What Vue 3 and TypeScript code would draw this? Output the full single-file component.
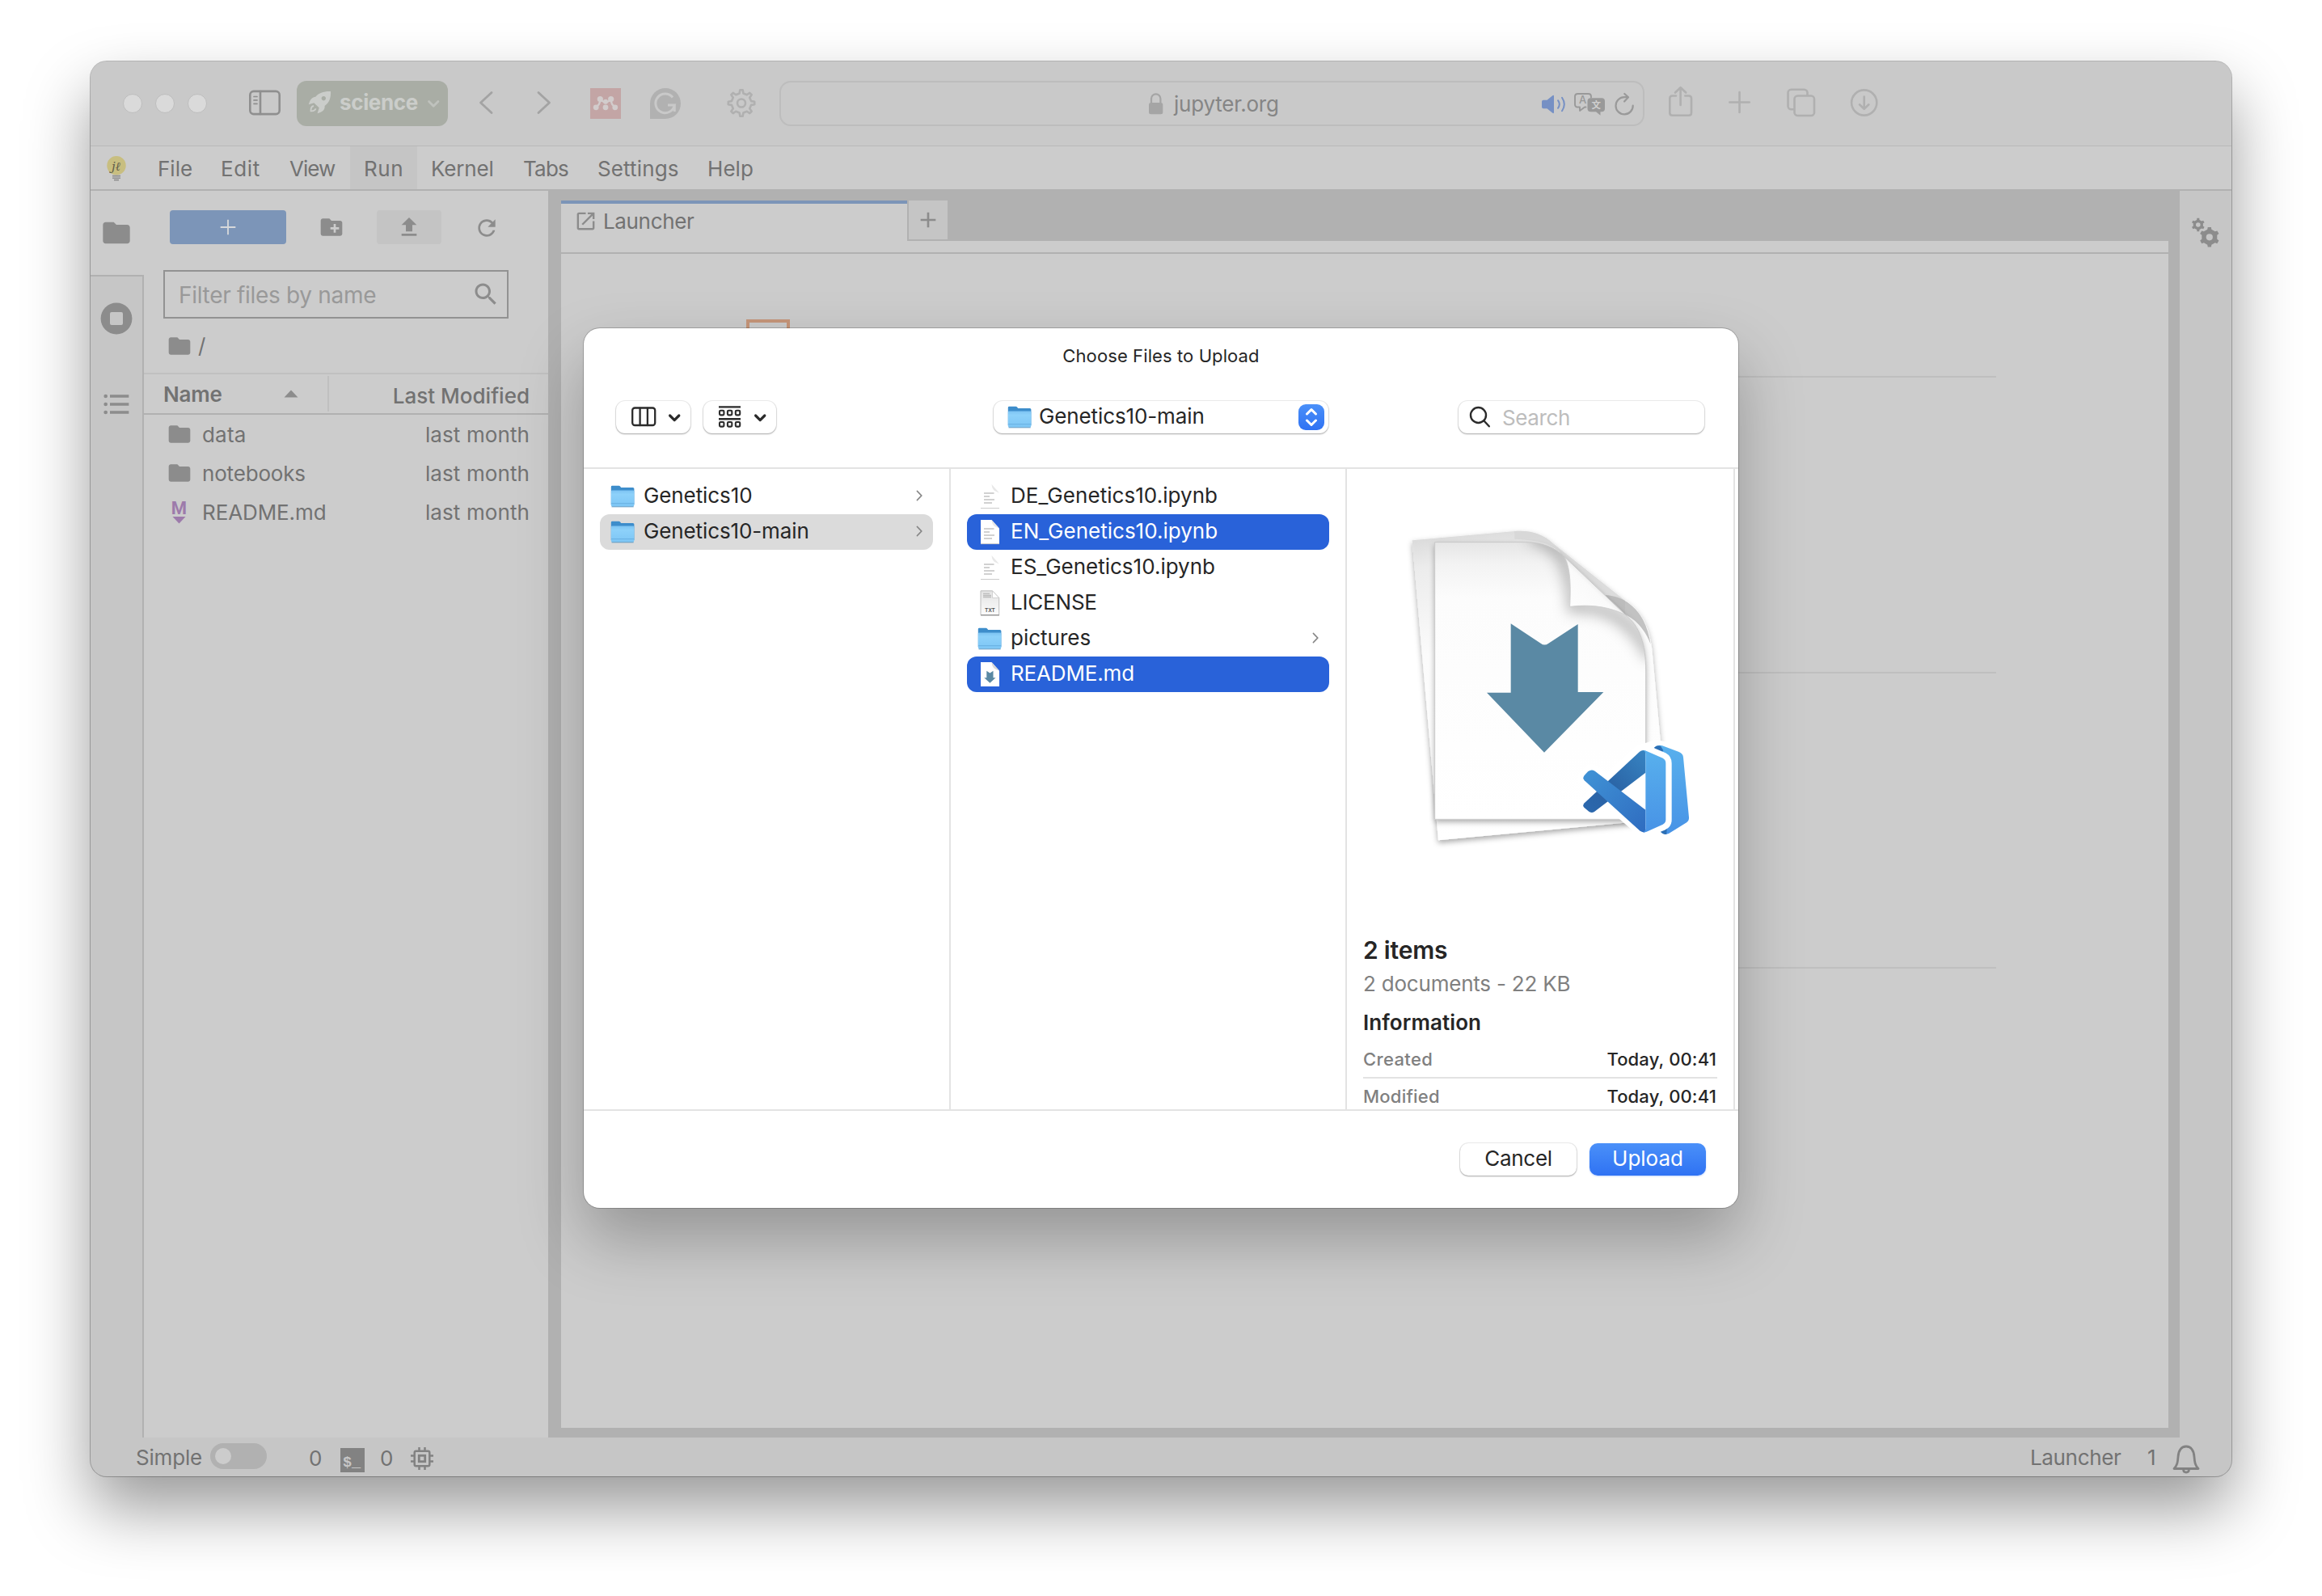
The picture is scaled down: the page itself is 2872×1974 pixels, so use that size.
<script setup lang="ts">
interface MenuItem { label: string; width: number; spacing: number; active?: boolean }
interface FileRow { name: string; kind: 'folder' | 'markdown'; spacing: number }
interface Entry { name: string; icon: 'folder' | 'doc' | 'txt' | 'md'; state?: 'active' | 'selected'; children?: boolean; spacing: number }

const menus: MenuItem[] = [
  { label: 'File', width: 78, spacing: 0 },
  { label: 'Edit', width: 85, spacing: 0.6 },
  { label: 'View', width: 92, spacing: -1 },
  { label: 'Run', width: 83, spacing: 0.6, active: true },
  { label: 'Kernel', width: 114, spacing: -0.16 },
  { label: 'Tabs', width: 92, spacing: -0.8 },
  { label: 'Settings', width: 136, spacing: 0.13 },
  { label: 'Help', width: 90, spacing: 0.07 },
]

const files: FileRow[] = [
  { name: 'data', kind: 'folder', spacing: 0.2 },
  { name: 'notebooks', kind: 'folder', spacing: -0.17 },
  { name: 'README.md', kind: 'markdown', spacing: -0.1 },
]

const parentColumn: Entry[] = [
  { name: 'Genetics10', icon: 'folder', children: true, spacing: -0.1 },
  { name: 'Genetics10-main', icon: 'folder', children: true, state: 'active', spacing: -0.12 },
]

const childColumn: Entry[] = [
  { name: 'DE_Genetics10.ipynb', icon: 'doc', spacing: 0.05 },
  { name: 'EN_Genetics10.ipynb', icon: 'doc', state: 'selected', spacing: 0.01 },
  { name: 'ES_Genetics10.ipynb', icon: 'doc', spacing: 0 },
  { name: 'LICENSE', icon: 'txt', spacing: -0.2 },
  { name: 'pictures', icon: 'folder', children: true, spacing: 0 },
  { name: 'README.md', icon: 'md', state: 'selected', spacing: -0.15 },
]

const columns = [parentColumn, childColumn]

const folderPath = 'M10 4H4c-1.1 0-1.99.9-1.99 2L2 18c0 1.1.9 2 2 2h16c1.1 0 2-.9 2-2V8c0-1.1-.9-2-2-2h-8l-2-2z'
const addPath = 'M19 13h-6v6h-2v-6H5v-2h6V5h2v6h6v2z'

// Closed outline of a cog wheel with `n` trapezoid teeth.
function gear(cx: number, cy: number, outer: number, inner: number, n: number, top = 0.2, base = 0.3): string {
  const pts: string[] = []
  const step = (Math.PI * 2) / n
  for (let i = 0; i < n; i++) {
    const a = i * step - Math.PI / 2
    const corners: [number, number][] = [[-base, inner], [-top, outer], [top, outer], [base, inner]]
    for (const [k, r] of corners) {
      pts.push(`${(cx + r * Math.cos(a + k * step)).toFixed(2)} ${(cy + r * Math.sin(a + k * step)).toFixed(2)}`)
    }
  }
  return `M${pts.join('L')}Z`
}
</script>

<template>
  <div class="desktop">
    <div class="window">
      <header class="toolbar">
        <div class="lights"><i></i><i></i><i></i></div>
        <svg class="ic sidebar-ic" width="40" height="44" viewBox="307 106 40 44" fill="none" stroke="#8f8f8f" stroke-width="2.6" stroke-linecap="round">
          <rect x="309.3" y="112.9" width="36.4" height="28.2" rx="4.5" />
          <path d="M322 113v28" />
          <path d="M314 119.5h4M314 123.9h4M314 128.3h4" stroke-width="1.7" />
        </svg>
        <div class="pill">
          <svg width="30" height="30" viewBox="381 112 30 30">
            <path fill="#cbcdca" fill-rule="evenodd" d="M409 113C401 112.600 394 115 390.300 119.700C386.300 119.800 383.500 123 381.800 129.300L388.300 127.300L394.700 133.300L392.600 140.300C399 138.500 402.200 135.500 401.600 131C407.500 127 409.500 120 409 113ZM400.300 119a2.700 2.700 0 1 0 .01 0Z" />
            <path fill="none" stroke="#cbcdca" stroke-width="1.800" d="M388 131c-3 .6-3.700 3.400-3.500 6.300c3.200.2 5.200-.5 6-3.100" />
          </svg>
          <span>science</span>
          <svg class="pill-caret" width="18" height="12" viewBox="527 121 18 12" fill="none" stroke="#bfc2bd" stroke-width="2.800" stroke-linecap="round" stroke-linejoin="round"><path d="M530.500 124.500l5.700 5.700l5.700-5.700" /></svg>
        </div>
        <svg class="ic back-ic" width="22" height="44" viewBox="590 106 22 44" fill="none" stroke="#a3a3a3" stroke-width="2.800" stroke-linecap="round" stroke-linejoin="round"><path d="M608 114.500L594.500 127L608 139.500" /></svg>
        <svg class="ic fwd-ic" width="22" height="44" viewBox="662 106 22 44" fill="none" stroke="#a3a3a3" stroke-width="2.800" stroke-linecap="round" stroke-linejoin="round"><path d="M666 114.500L679.500 127L666 139.500" /></svg>
        <svg class="ic mendeley-ic" width="38" height="44" viewBox="730 106 38 44">
          <path fill="#c3a5a5" d="M730 109h38v38h-38z" />
          <g fill="#d2cccc">
            <circle cx="742.300" cy="122.500" r="3.600" /><circle cx="755.700" cy="122.500" r="3.600" />
            <circle cx="737.200" cy="132.800" r="3.400" /><circle cx="760.800" cy="132.800" r="3.400" />
            <circle cx="749" cy="132.800" r="3.400" /><circle cx="749" cy="125.800" r="3" />
          </g>
          <path fill="none" stroke="#d2cccc" stroke-width="2.400" d="M737.500 131.500c3.500-1 4.500-4 4.800-8M760.500 131.500c-3.500-1-4.500-4-4.800-8M743 124l6 3l6-3" />
        </svg>
        <svg class="ic grammar-ic" width="38" height="44" viewBox="804 106 38 44">
          <path fill="#b1b1b1" d="M804 147v-19a19 19 0 1 1 19 19z" />
          <path fill="none" stroke="#c9c9c9" stroke-width="3" d="M832 120.500a11.800 11.800 0 1 0 2.300 9.500h-8.300M834.300 130v8" />
        </svg>
        <svg class="ic gear-ic" width="38" height="44" viewBox="898 106 38 44" fill="none" stroke="#b0b0b0" stroke-width="2.600" stroke-linejoin="round">
          <path :d="gear(917, 127.500, 16.300, 12.300, 8, 0.13, 0.25)" /><circle cx="917" cy="127.500" r="5" />
        </svg>
        <div class="url">
          <svg class="lock" width="20" height="30" viewBox="1420 115 20 30"><rect x="1421" y="129" width="17.300" height="14.300" rx="2.500" fill="#a5a5a5" /><path d="M1424 130v-6a5.700 5.700 0 0 1 11.400 0v6" fill="none" stroke="#a5a5a5" stroke-width="2.200" /></svg>
          <span class="host">jupyter.org</span>
          <svg class="url-right" width="116" height="44" viewBox="1906 106 116 44" fill="none" stroke-linecap="round" stroke-linejoin="round">
            <path fill="#7690c4" d="M1909 123.700h4.500l6.800-5.400q1.700-1.200 1.700.7v20q0 1.900-1.700.7l-6.800-5.400h-4.500q-2 0-2-2v-6.600q0-2 2-2z" />
            <path stroke="#7690c4" stroke-width="2" d="M1927 124.200q3.600 4.800 0 9.600M1932 120.800q5.600 8.200 0 16.400" />
            <path stroke="#999" stroke-width="1.900" d="M1961.500 132.500h-1.500l-6 4.500v-4.500h-2.500q-3.500 0-3.500-3.500v-9.500q0-3.500 3.500-3.500h13q3.500 0 3.500 3.500v1" />
            <path fill="#999" d="M1967.500 121.300h13.500q4 0 4 4v9q0 4-4 4h-1.500v4.400l-5.500-4.400h-6.500q-4 0-4-4v-9q0-4 4-4z" />
            <text x="1957.600" y="128.300" font-family="Inter, sans-serif" font-size="13" font-weight="500" text-anchor="middle" fill="#999">A</text>
            <text x="1974.300" y="134.300" font-family="'Noto Sans CJK SC', sans-serif" font-size="11.500" font-weight="700" text-anchor="middle" fill="#d0d0d0">文</text>
            <path stroke="#999" stroke-width="2.200" d="M2019.700 130.500a10.600 10.600 0 1 1-10.600-10.300h4.500M2009.300 116l4.700 4.300l-4.900 5.200" />
          </svg>
        </div>
        <svg class="ic share-ic" width="32" height="44" viewBox="2062 106 32 44" fill="none" stroke="#b0b0b0" stroke-width="2.600" stroke-linecap="round" stroke-linejoin="round"><path d="M2073 118.500h-4.500q-3.200 0-3.200 3.200v17.800q0 3.200 3.200 3.200h20.300q3.200 0 3.200-3.200v-17.800q0-3.200-3.200-3.200h-4.500M2078.600 130v-21.500M2072 114.500l6.600-6.300l6.600 6.300" /></svg>
        <svg class="ic plus-ic" width="28" height="44" viewBox="2138 106 28 44" fill="none" stroke="#b0b0b0" stroke-width="2.600" stroke-linecap="round"><path d="M2139.300 126.500h24.500M2151.500 114v25" /></svg>
        <svg class="ic tabs-ic" width="36" height="44" viewBox="2210 106 36 44" fill="none" stroke="#b0b0b0" stroke-width="2.600"><rect x="2211.500" y="110.800" width="24" height="24.500" rx="4" /><rect x="2219.500" y="118.500" width="24.500" height="24.500" rx="4" fill="#c9c9c9" /></svg>
        <svg class="ic down-ic" width="36" height="44" viewBox="2288 106 36 44" fill="none" stroke="#b0b0b0" stroke-width="2.600" stroke-linecap="round" stroke-linejoin="round"><circle cx="2305.700" cy="127" r="15.600" /><path d="M2305.700 119.500v15M2300 129.300l5.700 5.500l5.700-5.500" /></svg>
      </header>

      <nav class="menubar">
        <svg class="logo" width="26" height="34" viewBox="131 191 26 34">
          <circle cx="144" cy="204.700" r="11.700" fill="#c8be80" />
          <text x="143.500" y="210.500" text-anchor="middle" font-family="'DejaVu Serif', serif" font-style="italic" font-size="15" fill="#5f5c4a">jℓ</text>
          <path d="M139 217.600h10M139 220.200h10M141 222.600h6" stroke="#8f8f8f" stroke-width="1.600" />
        </svg>
        <span v-for="m in menus" :key="m.label" class="menu" :class="{ on: m.active }" :style="{ width: m.width + 'px', letterSpacing: m.spacing + 'px' }">{{ m.label }}</span>
      </nav>

      <div class="body">
        <aside class="rail">
          <div class="rail-tab current"><svg width="40" height="40" viewBox="0 0 24 24" fill="#8c8c8c"><path :d="folderPath" /></svg></div>
          <div class="rail-tab"><svg width="40" height="40" viewBox="0 0 40 40"><circle cx="20" cy="20" r="19.400" fill="#8c8c8c" /><rect x="12" y="12" width="16" height="16" rx="2" fill="#c6c6c6" /></svg></div>
          <div class="rail-tab toc"><svg width="40" height="40" viewBox="0 0 24 24" fill="#8c8c8c"><circle cx="4" cy="6" r="1.400" /><circle cx="4" cy="12" r="1.400" /><circle cx="4" cy="18" r="1.400" /><path d="M7.200 5h14v2h-14zM7.200 11h14v2h-14zM7.200 17h14v2h-14z" /></svg></div>
        </aside>

        <section class="files">
          <div class="file-tools">
            <div class="new-btn"><svg width="32" height="32" viewBox="0 0 24 24" fill="#d6d8da"><path d="M19 12.700h-6.300v6.300h-1.400v-6.300H5v-1.400h6.300V5h1.400v6.300H19z" /></svg></div>
            <svg class="new-folder" width="32" height="32" viewBox="0 0 24 24" fill="#8c8c8c"><path d="M20 6h-8l-2-2H4c-1.110 0-1.990.89-1.990 2L2 18c0 1.110.89 2 2 2h16c1.110 0 2-.89 2-2V8c0-1.110-.89-2-2-2zm-1 8h-3v3h-2v-3h-3v-2h3V9h2v3h3v2z" /></svg>
            <div class="upload-btn"><svg width="32" height="32" viewBox="0 0 24 24" fill="#8c8c8c"><path d="M5 20h14v-2H5v2zM5 10h4v6h6v-6h4l-7-7-7 7z" /></svg></div>
            <svg class="refresh" width="32" height="32" viewBox="0 0 24 24" fill="#8c8c8c"><path d="M17.650 6.350C16.200 4.900 14.210 4 12 4c-4.420 0-7.990 3.580-7.990 8s3.570 8 7.990 8c3.730 0 6.840-2.550 7.730-6h-2.080c-.82 2.330-3.040 4-5.650 4-3.310 0-6-2.690-6-6s2.690-6 6-6c1.660 0 3.140.69 4.220 1.780L13 11h7V4l-2.350 2.350z" /></svg>
          </div>
          <div class="filter">
            <span>Filter files by name</span>
            <svg width="36" height="36" viewBox="0 0 24 24" fill="#8c8c8c"><path d="M15.500 14h-.79l-.28-.27C15.410 12.590 16 11.110 16 9.500 16 5.910 13.090 3 9.500 3S3 5.910 3 9.500 5.910 16 9.500 16c1.610 0 3.090-.59 4.230-1.570l.27.28v.79l5 4.990L20.490 19l-4.990-5zm-6 0C7.010 14 5 11.990 5 9.500S7.010 5 9.500 5 14 7.010 14 9.500 11.990 14 9.500 14z" /></svg>
          </div>
          <div class="crumbs"><svg width="32" height="32" viewBox="0 0 24 24" fill="#8c8c8c"><path :d="folderPath" /></svg><span>/</span></div>
          <div class="list-head">
            <div class="head-name"><span>Name</span><svg width="18" height="10" viewBox="0 0 18 10"><path d="M.5 9.500L9 .5l8.500 9z" fill="#8c8c8c" /></svg></div>
            <div class="head-date">Last Modified</div>
          </div>
          <div v-for="f in files" :key="f.name" class="file-row">
            <svg v-if="f.kind === 'folder'" width="32" height="32" viewBox="0 0 24 24" fill="#8c8c8c"><path :d="folderPath" /></svg>
            <svg v-else width="32" height="32" viewBox="0 0 32 32" fill="#9d7bab"><text x="15.500" y="18.800" text-anchor="middle" font-family="Roboto, sans-serif" font-size="22" font-weight="700">M</text><path d="M7.500 22h16l-8 8.500z" /></svg>
            <span class="file-name" :style="{ letterSpacing: f.spacing + 'px' }">{{ f.name }}</span>
            <span class="file-date">last month</span>
          </div>
        </section>

        <main class="dock">
          <div class="tabs">
            <div class="tab">
              <svg width="29" height="29" viewBox="0 0 24 24" fill="#8c8c8c"><path d="M19 19H5V5h7V3H5c-1.110 0-2 .9-2 2v14c0 1.100.89 2 2 2h14c1.100 0 2-.9 2-2v-7h-2v7zM14 3v2h3.590l-9.830 9.830 1.410 1.410L19 6.410V10h2V3h-7z" /></svg>
              <span>Launcher</span>
            </div>
            <div class="tab-add"><svg width="32" height="32" viewBox="0 0 24 24" fill="#8c8c8c"><path :d="addPath" /></svg></div>
          </div>
          <div class="strip"></div>
          <div class="launcher">
            <div class="group first"><i class="kernel-mark"></i></div>
            <div class="group second"></div>
            <div class="group third"></div>
          </div>
        </main>

        <aside class="rail-right">
          <svg width="36" height="38" viewBox="2710 269 36 38" fill="#8c8c8c" fill-rule="evenodd">
            <path :d="gear(2718.800, 278, 8.300, 6.300, 6, 0.17, 0.25) + 'M2716 278a2.800 2.800 0 1 0 5.600 0a2.800 2.800 0 1 0-5.600 0Z'" />
            <path :d="gear(2732.800, 293.300, 12.400, 9.800, 6, 0.16, 0.25) + 'M2728.700 293.300a4.100 4.100 0 1 0 8.200 0a4.100 4.100 0 1 0-8.200 0Z'" />
          </svg>
        </aside>
      </div>

      <footer class="status">
        <span class="simple">Simple</span>
        <span class="toggle"><i></i></span>
        <span class="n1">0</span>
        <svg class="term" width="30" height="30" viewBox="0 0 30 30"><path fill="#828282" d="M0 0h30v30H0z" /><text x="3" y="22.500" font-family="'Liberation Mono', monospace" font-size="18.500" font-weight="700" fill="#c6c6c6">$_</text></svg>
        <span class="n2">0</span>
        <svg class="chip" width="28" height="28" viewBox="0 0 28 28" fill="none" stroke="#828282" stroke-width="2.500"><rect x="4.700" y="4.700" width="18.600" height="18.600" rx="2" /><rect x="10.300" y="10.300" width="7.400" height="7.400" stroke-width="2.800" /><path d="M10.500 0v4.500M17.500 0v4.500M10.500 23.500V28M17.500 23.500V28M0 10.500h4.500M0 17.500h4.500M23.500 10.500H28M23.500 17.500H28" /></svg>
        <span class="mode">Launcher</span>
        <span class="count">1</span>
        <svg class="bell" width="34" height="36" viewBox="0 0 34 36" fill="none" stroke="#828282" stroke-width="2.800" stroke-linejoin="round"><path d="M2 29.500c4-4 4.500-8 5-14.500c.4-8 4-13 10-13s9.600 5 10 13c.500 6.500 1 10.500 5 14.500z" /><path d="M13.500 30.500c.3 4.700 6.700 4.700 7 0" /></svg>
      </footer>

      <div class="dialog">
        <div class="dialog-head">
          <div class="title">Choose Files to Upload</div>
          <div class="controls">
            <div class="ctl view-ctl">
              <svg width="92" height="40" viewBox="762 496 92 40" fill="none" stroke="#2b2b2b" stroke-width="2.300" stroke-linecap="round" stroke-linejoin="round"><rect x="782.200" y="504.500" width="28" height="21.500" rx="3" /><path d="M791.600 505v21M800.900 505v21" /><path d="M828.600 514l5.600 5.600l5.600-5.600" stroke-width="3.200" /></svg>
            </div>
            <div class="ctl group-ctl">
              <svg width="90" height="40" viewBox="870 496 90 40" fill="none" stroke="#2b2b2b" stroke-width="2.100" stroke-linejoin="round"><path d="M889 503.400h27M889 518.200h27" stroke-width="2.400" /><rect v-for="n in 6" :key="n" :x="890 + ((n - 1) % 3) * 9.900" :y="n < 4 ? 507.800 : 522" width="5.400" height="5.600" rx="1.300" /><path d="M934.600 514l5.600 5.600l5.600-5.600" stroke-width="3.200" stroke-linecap="round" /></svg>
            </div>
            <div class="ctl place">
              <svg width="30" height="28" viewBox="0 0 30 28"><use href="#folder-art" /></svg>
              <span>Genetics10-main</span>
              <i class="stepper"><svg width="32" height="32" viewBox="0 0 32 32" fill="none" stroke="#fff" stroke-width="3" stroke-linecap="round" stroke-linejoin="round"><path d="M10.500 12L16 6.500l5.500 5.500M10.500 20l5.500 5.500l5.500-5.500" /></svg></i>
            </div>
            <div class="ctl search">
              <svg width="28" height="28" viewBox="0 0 28 28" fill="none" stroke="#2b2b2b" stroke-width="2.400" stroke-linecap="round"><circle cx="11.500" cy="11.500" r="9.500" /><path d="M18.500 18.500l6.300 6.800" /></svg>
              <span>Search</span>
            </div>
          </div>
        </div>

        <div class="browser">
          <div v-for="(col, ci) in columns" :key="ci" class="column" :class="'column-' + ci">
            <div v-for="e in col" :key="e.name" class="entry" :class="e.state">
              <svg v-if="e.icon === 'folder'" width="30" height="30" viewBox="0 -1 30 30"><use href="#folder-art" /></svg>
              <svg v-else-if="e.icon === 'doc'" width="30" height="32" viewBox="0 0 30 32">
                <path d="M4 1h13.500L27 11.500V31H4z" fill="#fff" />
                <path d="M17.500 1c.6 5 1.500 8 9.300 10.500L18 1.500z" fill="#e2e2e2" opacity=".8" />
                <path d="M4 30.600h23" stroke="#c9c9c9" stroke-width="1" />
                <path d="M8 12h12.500M8 16h7M8 20h13M8 24h10" stroke="#c2c2c2" stroke-width="1.700" />
              </svg>
              <svg v-else-if="e.icon === 'txt'" width="30" height="32" viewBox="0 0 30 32">
                <defs><linearGradient id="txt" x2="0" y2="1"><stop offset="0" stop-color="#e3e3e3" /><stop offset="1" stop-color="#fcfcfc" /></linearGradient></defs>
                <path d="M4 .8h14.500L26.700 9.500V30.500H4z" fill="url(#txt)" stroke="#bdbdbd" stroke-width="1" /><path d="M4 30.900h23" stroke="#8f8f8f" stroke-width="1.200" />
                <path d="M7 4.300h8M7 6.500h10M7 8.500h10" stroke="#bcbcbc" stroke-width="1.300" /><path d="M18.500 .8v8.700h8.200z" fill="#fff" stroke="#c9c9c9" stroke-width=".8" />
                <text x="15.400" y="26.500" text-anchor="middle" font-family="Inter, sans-serif" font-size="6.500" font-weight="600" fill="#4d4d4d">TXT</text>
              </svg>
              <svg v-else width="30" height="32" viewBox="0 0 30 32">
                <path d="M4 1h13.500L27 11.500V31H4z" fill="#fff" /><path d="M17.500 1c.6 5 1.500 8 9.300 10.500L18 1.500z" fill="#d9d9d9" />
                <path d="M11.300 11.800l4.100 2.700l4.100-2.700v8.500h3l-7.100 6.400l-7.100-6.400h3z" fill="#5a89a4" />
              </svg>
              <span :style="{ letterSpacing: e.spacing + 'px' }">{{ e.name }}</span>
              <svg v-if="e.children" class="go" width="10" height="16" viewBox="0 0 10 16" fill="none" stroke="#858585" stroke-width="1.800" stroke-linecap="round" stroke-linejoin="round"><path d="M2.500 2.500L7.800 8L2.500 13.500" /></svg>
            </div>
          </div>

          <div class="preview">
            <svg width="478" height="540" viewBox="18 -60 1434 1620">
              <defs>
                <linearGradient id="back" x1="0" y1="0" x2=".1" y2="1"><stop offset="0" stop-color="#d6d6d6" /><stop offset=".12" stop-color="#ececec" /><stop offset=".4" stop-color="#fbfbfb" /><stop offset="1" stop-color="#fff" /></linearGradient>
                <linearGradient id="front" x2="0" y2="1"><stop offset="0" stop-color="#e6e6e6" /><stop offset=".08" stop-color="#f3f3f3" /><stop offset=".2" stop-color="#fcfcfc" /><stop offset="1" stop-color="#fff" /></linearGradient>
                <linearGradient id="curl" x1="0" y1="1" x2="1" y2="0"><stop offset="0" stop-color="#fff" /><stop offset=".45" stop-color="#fafafa" /><stop offset=".6" stop-color="#dcdcdc" /></linearGradient>
                <linearGradient id="vsdark" x1="0" y1="1" x2="1" y2="0"><stop offset="0" stop-color="#2b68ae" /><stop offset=".4" stop-color="#2a62a4" /><stop offset="1" stop-color="#3784c2" /></linearGradient>
                <linearGradient id="vsmid" x1="0" y1="0" x2="1" y2="1"><stop offset="0" stop-color="#4093d6" /><stop offset="1" stop-color="#2f6cc0" /></linearGradient>
                <linearGradient id="vslight" x2="0" y2="1"><stop offset="0" stop-color="#58b0ed" /><stop offset="1" stop-color="#4893e6" /></linearGradient>
                <filter id="soft" x="-20%" y="-20%" width="140%" height="140%"><feGaussianBlur stdDeviation="26" /></filter>
                <filter id="drop" x="-10%" y="-10%" width="120%" height="120%"><feDropShadow dx="0" dy="10" stdDeviation="11" flood-color="#000" flood-opacity=".34" /></filter>
                <clipPath id="page"><path d="M344 212H680C760 212 800 240 825 266L1050 480C1105 525 1127 590 1127 690V1240H344Z" /></clipPath>
              </defs>
              <path filter="url(#drop)" fill="url(#back)" d="M260 205L640 171C705 167 745 182 785 218L1050 428C1115 470 1140 530 1150 610L1186 1000L1190 1240L357 1318Z" />
              <path fill="#d6d6d6" d="M640 171C705 167 745 182 785 218L1050 428L1050 480L820 262C790 225 750 205 640 200Z" opacity=".8" />
              <path fill="#b4b4b4" d="M975 408C1010 410 1035 418 1060 436C1115 475 1135 530 1145 590C1120 530 1090 500 1050 480Z" opacity=".8" />
              <path filter="url(#drop)" fill="url(#front)" d="M344 212H680C760 212 800 240 825 266L1050 480C1105 525 1127 590 1127 690V1240H344Z" />
              <g clip-path="url(#page)">
                <path d="M700 190C810 215 850 290 860 451C960 445 1070 480 1150 640" fill="none" stroke="#000" stroke-opacity=".27" stroke-width="46" filter="url(#soft)" />
              </g>
              <path fill="url(#curl)" d="M825 266C850 310 848 390 845 451C930 440 1000 455 1052 482Z" />
              <path d="M825 266C850 310 848 390 845 451C930 440 1000 455 1052 482" fill="none" stroke="#cdcdcd" stroke-width="2.500" />
              <path d="M344 1240V212H680C740 212 790 232 825 266L1052 482C1105 525 1127 590 1127 690V1240Z" fill="none" stroke="#c8c8c8" stroke-width="3" />
              <path fill="#5a89a4" d="M626 514L737 587Q751 598 766 587L875 516V768H970L750 992L537 770H626Z" />
              <path fill="#fff" stroke="#fff" stroke-width="50" stroke-linejoin="round" d="M1166 970L1252 990L1267 1010L1287 1242L1200 1294L1120 1284L900 1090L925 1060L985 1100L1105 990Z" />
              <path fill="url(#vslight)" d="M1158 974Q1172 962 1188 967L1250 990Q1265 996 1266 1010L1287 1233Q1288 1246 1276 1253L1212 1293Q1196 1300 1182 1286Z" />
              <path fill="#2c6fb5" d="M1158 974Q1168 964 1182 968L1192 985L1180 1000ZM1180 1270L1205 1272L1204 1296Q1190 1298 1180 1284Z" />
              <path fill="#fff" stroke="#fff" stroke-width="44" stroke-linejoin="round" d="M1126 986L1190 1013Q1201 1019 1201 1032V1242Q1201 1254 1190 1259L1120 1288L985 1172L925 1213L897 1188L945 1137L897 1085L925 1058L985 1100L1105 992Z" />
              <path fill="url(#vsdark)" d="M899 1180L1104 989Q1114 981 1126 986V1067L937 1211Q925 1219 914 1210L898 1196Q891 1188 899 1180Z" />
              <path fill="url(#vsmid)" d="M899 1077L913 1062Q925 1053 938 1061L1126 1205V1287Q1115 1291 1104 1282L899 1096Q891 1087 899 1077Z" />
              <path fill="url(#vslight)" d="M1117 983Q1124 984 1130 987L1190 1013Q1201 1019 1201 1032V1242Q1201 1254 1190 1259L1130 1286Q1122 1289 1117 1288Q1126 1284 1126 1274V998Q1126 988 1117 983Z" />
            </svg>
            <div class="p-title">2 items</div>
            <div class="p-sub">2 documents - 22 KB</div>
            <div class="p-info">Information</div>
            <div class="p-row ruled"><span>Created</span><b>Today, 00:41</b></div>
            <div class="p-row"><span class="tight">Modified</span><b>Today, 00:41</b></div>
          </div>
        </div>

        <div class="dialog-foot">
          <div class="btn cancel">Cancel</div>
          <div class="btn upload">Upload</div>
        </div>
      </div>
    </div>

    <svg width="0" height="0" class="defs">
      <defs>
        <linearGradient id="fold" x2="0" y2="1"><stop offset="0" stop-color="#7cc3f2" /><stop offset=".25" stop-color="#8dd1fa" /><stop offset="1" stop-color="#7dc6f5" /></linearGradient>
        <g id="folder-art">
          <path d="M.8 2.200Q.8.800 2.200.800h8.300q.9 0 1.500.8l1.200 1.400h14.600q1.600 0 1.600 1.600V24H.8z" fill="#3d8dcb" />
          <path d="M.8 7.800q0-1.400 1.400-1.400h25.600q1.600 0 1.600 1.400v17q0 1.800-1.800 1.800H2.600Q.8 26.600.8 24.800z" fill="url(#fold)" />
          <path d="M1 22.700h28.200" stroke="#64aedf" stroke-width=".9" />
          <path d="M1.500 26.800h27.200" stroke="#5a97c2" stroke-width="1" />
        </g>
      </defs>
    </svg>
  </div>
</template>

<style>
html, body { margin: 0; background: #fff; }
</style>

<style scoped>
.desktop { box-sizing: border-box; width: 2872px; height: 1974px; padding: 76px 112px 0; overflow: hidden; background: #fff; font-family: Inter, "Liberation Sans", sans-serif; font-size: 26px; color: #727272; white-space: nowrap; }
.desktop * { box-sizing: border-box; }
svg { display: block; flex: none; }
.defs { position: absolute; }
.window { position: relative; display: flex; flex-direction: column; width: 2648px; height: 1750px; border-radius: 20px; background: #c6c6c6; box-shadow: 0 0 0 1px rgba(0, 0, 0, .26), 0 40px 80px rgba(0, 0, 0, .4); }

.toolbar { display: flex; align-items: center; flex: none; height: 105px; padding: 0 0 0 40px; border-bottom: 1px solid #b8b8b8; border-radius: 20px 20px 0 0; background: #c9c9c9; }
.lights { display: flex; gap: 16px; }
.lights i { width: 24px; height: 24px; border: 1px solid #bdbdbd; border-radius: 50%; background: #dadada; }
.sidebar-ic { margin-left: 51px; }
.pill { display: flex; align-items: center; width: 187px; height: 56px; margin-left: 20px; padding: 0 0 3px 14px; border-radius: 12px; background: #a9ada5; color: #cbcdca; font-weight: 700; }
.pill span { margin-left: 9px; width: 107px; letter-spacing: -.35px; }
.pill-caret { margin-top: 2px; }
.back-ic { margin-left: 36px; }
.fwd-ic { margin-left: 50px; }
.mendeley-ic { margin-left: 46px; }
.grammar-ic { margin-left: 36px; }
.gear-ic { margin-left: 56px; }
.url { display: flex; align-items: center; width: 1070px; height: 56px; margin-left: 28px; padding: 0 10px 0 454px; border: 2px solid #bdbdbd; border-radius: 14px; color: #858585; }
.host { margin-left: 12px; letter-spacing: -.21px; }
.url-right { margin-left: auto; }
.share-ic { margin-left: 28px; }
.plus-ic { margin-left: 44px; }
.tabs-ic { margin-left: 44px; }
.down-ic { margin-left: 42px; }

.menubar { display: flex; flex: none; height: 55px; padding-left: 19px; border-bottom: 2px solid #b1b1b1; background: #ccc; }
.logo { margin: 10px 21px 0 0; }
.menu { height: 53px; padding: 1px 0 0 17px; line-height: 53px; }
.menu.on { background: #c5c5c5; }

.body { display: flex; flex: none; height: 1542px; }
.rail { display: flex; flex: none; flex-direction: column; width: 66px; }
.rail-tab { display: flex; align-items: center; justify-content: center; height: 104px; border-right: 2px solid #b1b1b1; }
.rail-tab.current { height: 106px; padding-right: 2px; border-right: 0; border-bottom: 2px solid #b1b1b1; background: #ccc; }
.rail-tab.toc { padding-top: 3px; }
.rail::after { content: ""; flex: 1; border-right: 2px solid #b1b1b1; }

.files { flex: none; width: 500px; background: #ccc; }
.file-tools { display: flex; align-items: center; height: 42px; margin: 24px 0 0 32px; }
.new-btn { display: flex; align-items: center; justify-content: center; width: 144px; height: 42px; border-radius: 4px; background: #7c95b8; }
.new-folder { margin-left: 40px; }
.upload-btn { display: flex; align-items: center; justify-content: center; width: 80px; height: 42px; margin-left: 40px; border-radius: 4px; background: #c4c4c4; }
.refresh { margin: 1px 0 0 40px; }
.filter { display: flex; align-items: center; justify-content: space-between; width: 427px; height: 60px; margin: 32px 0 0 24px; padding: 2px 8px 0 17px; border: 2px solid #929292; color: #999; font-size: 28px; letter-spacing: -.31px; }
.filter svg { margin-top: -2px; }
.crumbs { display: flex; align-items: center; height: 67px; padding-left: 28px; }
.crumbs span { margin-left: 7px; }
.list-head { display: flex; height: 52px; border-top: 2px solid #c0c0c0; border-bottom: 2px solid #b1b1b1; }
.head-name { display: flex; align-items: center; width: 229px; height: 44px; margin-top: 2px; padding-left: 24px; border-right: 2px solid #c0c0c0; font-weight: 600; letter-spacing: -.16px; }
.head-name svg { margin-left: 76px; }
.head-date { flex: 1; padding: 3px 23px 0 0; line-height: 48px; text-align: right; font-weight: 500; }
.file-row { display: flex; align-items: center; height: 48px; padding: 0 23px 0 28px; }
.file-name { margin-left: 12px; }
.file-date { margin-left: auto; letter-spacing: .1px; }

.dock { flex: none; display: flex; flex-direction: column; width: 2018px; padding: 12px 14px 12px 16px; background: #b1b1b1; }
.tabs { display: flex; height: 50px; }
.tab { display: flex; align-items: center; width: 428px; height: 50px; padding: 0 0 4px 16px; border-top: 4px solid #7c95b8; background: #ccc; letter-spacing: -.35px; }
.tab span { margin-left: 7px; }
.tab-add { display: flex; align-items: center; justify-content: center; width: 48px; height: 48px; margin-left: 2px; background: #c5c5c5; }
.strip { height: 16px; border-bottom: 2px solid #b1b1b1; background: #ccc; }
.launcher { flex: 1; background: #ccc; }
.group { width: 1546px; margin-left: 229px; border-bottom: 2px solid #bfbfbf; }
.group.first { height: 153px; padding-top: 81px; }
.group.second { height: 366px; }
.group.third { height: 365px; }
.kernel-mark { display: block; width: 54px; height: 54px; border: 4px solid #c6967a; }
.rail-right { display: flex; flex: none; width: 64px; justify-content: flex-end; padding: 33px 14px 0 0; }

.status { display: flex; align-items: center; flex: none; height: 48px; padding: 0 39px 0 56px; }
.simple { width: 92px; letter-spacing: -.19px; }
.toggle { width: 70px; height: 32px; padding: 6px; margin-bottom: 2px; border-radius: 16px; background: #b1b1b1; }
.toggle i { display: block; width: 20px; height: 20px; border-radius: 50%; background: #ccc; }
.n1 { width: 39px; margin-left: 52px; padding-top: 2px; }
.n2 { width: 38px; margin-left: 19px; padding-top: 2px; }
.term { margin-top: 8px; }
.chip { margin-top: 4px; }
.mode { margin-left: auto; padding-top: 1px; width: 145px; letter-spacing: -.35px; }
.count { width: 31px; padding-top: 1px; }
.bell { margin-top: 5px; }

.dialog { position: absolute; left: 610px; top: 330px; display: flex; flex-direction: column; width: 1428px; height: 1088px; border-radius: 20px; background: #fff; color: #262626; box-shadow: 0 0 0 1px rgba(0, 0, 0, .2), 0 38px 80px rgba(0, 0, 0, .27); }
.dialog-head { height: 174px; border-bottom: 2px solid #e3e3e3; }
.title { height: 68px; line-height: 68px; text-align: center; font-size: 22px; font-weight: 400; letter-spacing: .1px; }
.controls { display: flex; height: 40px; margin: 22px 0 0 40px; }
.ctl { display: flex; align-items: center; height: 40px; border-radius: 11px; background: #fff; box-shadow: 0 0 0 1px rgba(0, 0, 0, .07), 0 1px 2px rgba(0, 0, 0, .3); }
.view-ctl { width: 92px; }
.group-ctl { width: 90px; margin-left: 16px; }
.place { width: 414px; margin-left: 269px; padding: 0 5px 0 17px; }
.place span { margin: 0 auto 3px 9px; letter-spacing: -.12px; }
.stepper { width: 32px; height: 32px; border-radius: 9px; background: linear-gradient(#4a90f9, #2f72f3); }
.search { width: 304px; margin-left: 161px; padding-left: 13px; color: #bdbdbd; }
.search span { margin-left: 13px; letter-spacing: -.38px; }

.browser { display: flex; height: 794px; border-bottom: 2px solid #e3e3e3; }
.column { flex: none; padding: 12px 20px 0; border-right: 2px solid #e3e3e3; }
.column-0 { width: 454px; }
.column-1 { width: 490px; }
.entry { display: flex; align-items: center; height: 44px; padding: 0 12px 0 13px; border-radius: 12px; }
.entry span { margin: 0 0 3px 11px; }
.entry .go { margin-left: auto; margin-bottom: 2px; }
.entry.active { background: #dbdbdb; }
.entry.selected { background: #2962d9; color: #fff; }
.preview { flex: none; width: 480px; height: 792px; overflow: hidden; border-right: 2px solid #e3e3e3; }
.p-title { margin: 35px 0 0 20px; line-height: 40px; font-size: 30px; font-weight: 600; letter-spacing: -.19px; }
.p-sub { margin-left: 20px; line-height: 43px; color: #808080; letter-spacing: -.21px; }
.p-info { height: 53px; margin-left: 20px; line-height: 54px; font-weight: 600; letter-spacing: .09px; }
.p-row { display: flex; justify-content: space-between; margin: 0 21px 0 20px; line-height: 44px; font-size: 22px; font-weight: 500; }
.p-row.ruled { height: 43px; margin-right: 20px; padding-right: 1px; line-height: 38px; border-bottom: 2px solid #e3e3e3; }
.p-row span { color: #808080; letter-spacing: .38px; }
.p-row .tight { letter-spacing: .23px; }
.p-row b { font-weight: 500; letter-spacing: .15px; }

.dialog-foot { display: flex; gap: 16px; justify-content: flex-end; padding: 40px 40px 0 0; }
.btn { width: 144px; height: 40px; padding-bottom: 3px; border-radius: 10px; line-height: 37px; text-align: center; }
.cancel { letter-spacing: -.29px; box-shadow: 0 0 0 1px rgba(0, 0, 0, .07), 0 1px 2px rgba(0, 0, 0, .3); }
.upload { background: linear-gradient(#4a90f9, #2f72f3); color: #fff; box-shadow: 0 1px 2px rgba(47, 114, 243, .3); }
</style>
